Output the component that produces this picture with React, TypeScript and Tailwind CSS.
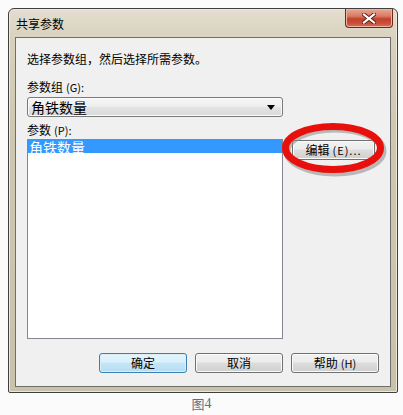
import React from "react";

const cjk = { fontFamily: '"Noto Sans CJK SC", "Noto Sans", sans-serif' };

function Btn({ children, primary = false, className = "" }: { children: React.ReactNode; primary?: boolean; className?: string }) {
  return (
    <div
      className={
        "flex h-[20px] items-center justify-center rounded-[3px] border text-[12px] leading-none text-black " +
        (primary
          ? "border-[#3c7fb1] bg-[linear-gradient(#e5f4fc_0%,#dbf0fb_45%,#c4e5f7_50%,#b6dcf3_100%)] shadow-[inset_0_0_0_1px_#d8effb]"
          : "border-[#707070] bg-[linear-gradient(#f2f2f2_0%,#ebebeb_45%,#dddddd_50%,#cfcfcf_100%)] shadow-[inset_0_0_0_1px_#fbfbfb]") +
        " " +
        className
      }
      style={cjk}
    >
      {children}
    </div>
  );
}

export default function App() {
  return (
    <div className="relative h-[415px] w-[403px] overflow-hidden bg-[#fbfbfb]" style={cjk}>
      <div className="pl-[8px] pt-[8px]">
        <div className="flex h-[385px] w-[390px] flex-col rounded-t-[6px] rounded-b-[2px] border border-[#3f3f3f] bg-[linear-gradient(180deg,#e3ded0_0%,#d7d1bd_8%,#cfc8b1_30%,#c9c2aa_100%)] shadow-[inset_0_0_0_1px_#ece8dc]">
          {/* title bar */}
          <div className="flex h-[28px] items-start">
            <div className="pl-[7px] pt-[8px] text-[12px] leading-[14px] text-black">共享参数</div>
            <div className="ml-auto mr-[4px] flex h-[19px] w-[48px] items-center justify-center rounded-b-[4px] border border-t-0 border-[#6b2a1c] bg-[linear-gradient(#e9a897_0%,#d77a63_40%,#c2412a_55%,#c9503a_80%,#d9735c_100%)] shadow-[inset_0_0_0_1px_#eeb3a3]">
              <svg width="14" height="11" viewBox="0 0 14 11">
                <path d="M2 1.5 L12 9.5 M12 1.5 L2 9.5" stroke="#5a1f16" strokeWidth="4" strokeLinecap="square" />
                <path d="M2 1.5 L12 9.5 M12 1.5 L2 9.5" stroke="#ffffff" strokeWidth="2.2" strokeLinecap="square" />
              </svg>
            </div>
          </div>
          {/* client area */}
          <div className="mx-[6px] mb-[5px] flex flex-1 flex-col border border-[#6e6e6e] bg-[#f0f0f0] pl-[11px] pr-[11px]">
            <div className="mt-[13px] text-[12px] leading-[16px] text-black">选择参数组，然后选择所需参数。</div>
            <div className="mt-[12px] text-[12px] leading-[16px] text-black">
              参数组<span className="ml-[3px] text-[11px]">(G):</span>
            </div>
            <div className="mt-[2px] flex h-[20px] w-[256px] items-center rounded-[3px] border border-[#7a7a7a] bg-[linear-gradient(#f6f6f6_0%,#eeeeee_45%,#e2e2e2_55%,#dadada_100%)] pl-[3px] pr-[7px] shadow-[inset_0_0_0_1px_#fcfcfc]">
              <span className="text-[14px] leading-none text-black">角铁数量</span>
              <svg className="ml-auto" width="8" height="5" viewBox="0 0 8 5">
                <path d="M0 0 H8 L4 5 Z" fill="#000" />
              </svg>
            </div>
            <div className="mt-[5px] text-[12px] leading-[16px] text-black">
              参数<span className="ml-[3px] text-[11px]">(P):</span>
            </div>
            <div className="mt-[1px] flex">
              <div className="h-[200px] w-[256px] border border-[#828790] bg-white">
                <div className="flex h-[13px] items-center bg-[#3399ff] pl-[1px] text-[14px] leading-none text-white">角铁数量</div>
              </div>
              <Btn className="ml-[9px] mt-[1px] w-[83px]">
                编辑<span className="ml-[3px] text-[11px] tracking-[1px]">(E)...</span>
              </Btn>
            </div>
            <div className="mt-[14px] flex justify-end gap-[8px]">
              <Btn primary className="w-[88px]">确定</Btn>
              <Btn className="w-[88px]">取消</Btn>
              <Btn className="w-[88px]">
                帮助<span className="ml-[3px] text-[11px]">(H)</span>
              </Btn>
            </div>
          </div>
        </div>
      </div>
      <div className="mt-[3px] flex justify-center text-[13px] leading-[16px] text-[#5d6f86]">
        <span>图</span>
        <span style={{ fontFamily: '"Liberation Serif", serif' }} className="text-[14px] text-[#5d6f86]">4</span>
      </div>
      {/* red annotation ellipse */}
      <svg className="pointer-events-none absolute left-0 top-0" width="403" height="415">
        <ellipse cx="335" cy="151" rx="48" ry="22" fill="none" stroke="#8a8a8a" strokeOpacity="0.55" strokeWidth="7" />
        <ellipse cx="333" cy="148" rx="47.5" ry="21.5" fill="none" stroke="#e8100c" strokeWidth="7" />
      </svg>
    </div>
  );
}
